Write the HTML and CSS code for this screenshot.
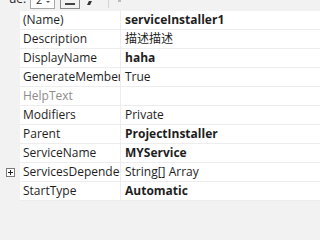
FILE: index.html
```html
<!DOCTYPE html>
<html>
<head>
<meta charset="utf-8">
<link rel="stylesheet" href="styles.css">
</head>
<body>
<div class="toolbar">
  <span class="tb-label">ue:</span>
  <span class="combo"><span class="combo-val">2</span><span class="combo-arrow"></span></span>
  <span class="tb-btn"><span class="tb-btn-icon"></span></span>
  <span class="tb-pen"></span>
  <span class="tb-sep"></span>
  <span class="tb-dot"></span>
</div>
<div class="grid">
  <div class="row"><div class="gut"></div><div class="name">(Name)</div><div class="val bold">serviceInstaller1</div></div>
  <div class="row"><div class="gut"></div><div class="name">Description</div><div class="val">描述描述</div></div>
  <div class="row"><div class="gut"></div><div class="name">DisplayName</div><div class="val bold">haha</div></div>
  <div class="row"><div class="gut"></div><div class="name">GenerateMember</div><div class="val">True</div></div>
  <div class="row"><div class="gut"></div><div class="name dim">HelpText</div><div class="val"></div></div>
  <div class="row"><div class="gut"></div><div class="name">Modifiers</div><div class="val">Private</div></div>
  <div class="row"><div class="gut"></div><div class="name">Parent</div><div class="val bold">ProjectInstaller</div></div>
  <div class="row"><div class="gut"></div><div class="name">ServiceName</div><div class="val bold">MYService</div></div>
  <div class="row"><div class="gut"><span class="plus"></span></div><div class="name">ServicesDependedOn</div><div class="val">String[] Array</div></div>
  <div class="row"><div class="gut"></div><div class="name">StartType</div><div class="val bold">Automatic</div></div>
</div>
</body>
</html>
```
FILE: styles.css
```css
html, body {
  margin: 0;
  padding: 0;
  background: #f2f2f2;
  overflow: hidden;
}
body {
  font-family: "Open Sans", "Noto Sans CJK SC", sans-serif;
  font-size: 12px;
  color: #1e1e1e;
  min-height: 217px;
}
.toolbar {
  height: 11px;
  display: flex;
  align-items: flex-start;
  overflow: hidden;
  background: #f2f2f2;
}
.tb-label {
  margin-left: 9px;
  width: 21px;
  line-height: 12px;
  margin-top: -7px;
  flex: none;
}
.combo {
  flex: none;
  width: 25px;
  height: 9px;
  border: 1px solid #a8a8a8;
  border-top: none;
  box-sizing: border-box;
  display: flex;
  justify-content: space-between;
  align-items: flex-start;
  background: #fff;
}
.combo-val { margin-left: 5px; font-size: 11px; line-height: 11px; margin-top: -6px; }
.combo-arrow {
  margin-right: 4px;
  margin-top: 1px;
  width: 0; height: 0;
  border-left: 2px solid transparent;
  border-right: 2px solid transparent;
  border-top: 2px solid #555;
}
.tb-btn {
  flex: none;
  margin-left: 5px;
  width: 20px;
  height: 9px;
  border: 1px solid #8a8a8a;
  border-top: none;
  box-sizing: border-box;
  display: flex;
  justify-content: center;
}
.tb-btn-icon {
  width: 10px;
  height: 2px;
  background: #444;
  margin-top: 3px;
}
.tb-pen {
  flex: none;
  margin-left: 8px;
  width: 3px;
  height: 4px;
  margin-top: 1px;
  background: #333;
  transform: skewX(-25deg);
}
.tb-sep {
  flex: none;
  margin-left: 17px;
  width: 1px;
  height: 8px;
  background: #d4d4d4;
}
.tb-dot {
  flex: none;
  margin-left: 9px;
  width: 3px;
  height: 2px;
  background: #bbb;
}

.grid {
  display: flex;
  flex-direction: column;
}
.row {
  display: flex;
  height: 19px;
}
.gut {
  width: 20px;
  flex: none;
  background: #f2f2f2;
  display: flex;
  align-items: center;
  justify-content: center;
}
.name {
  width: 101px;
  flex: none;
  box-sizing: border-box;
  padding-left: 3px;
  line-height: 18px;
  white-space: nowrap;
  overflow: hidden;
  background: #fff;
  border-bottom: 1px solid #ededed;
  border-right: 1px solid #ededed;
}
.val {
  flex: 1;
  box-sizing: border-box;
  padding-left: 4px;
  line-height: 18px;
  white-space: nowrap;
  overflow: hidden;
  background: #fff;
  border-bottom: 1px solid #ededed;
}
.bold { font-weight: bold; }
.dim { color: #8d8d8d; }
.plus {
  width: 9px;
  height: 9px;
  box-sizing: border-box;
  border: 1px solid #7a7a7a;
  position: relative;
  background: #fff;
}
.plus::before {
  content: "";
  position: absolute;
  left: 1px; top: 3px;
  width: 5px; height: 1px;
  background: #222;
}
.plus::after {
  content: "";
  position: absolute;
  left: 3px; top: 1px;
  width: 1px; height: 5px;
  background: #222;
}
```
